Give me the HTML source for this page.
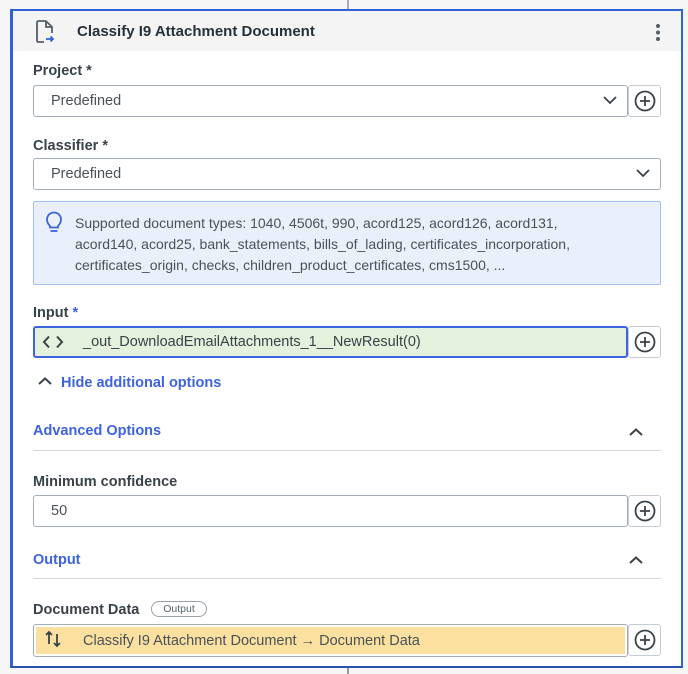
<!DOCTYPE html>
<html><head><meta charset="utf-8"><style>
*{box-sizing:border-box;margin:0;padding:0}
body{width:688px;height:674px;background:#f6f6f6;font-family:"Liberation Sans",sans-serif;position:relative;overflow:hidden;color:#273139}
.a{position:absolute}
.card{left:10px;top:9px;width:673px;height:659px;background:#fff;border:2px solid #2f62d6;border-left:3px solid #2f62d6;border-bottom:2px solid #2a50b0}
.hdr{left:13px;top:11px;width:668px;height:40px;background:#f4f4f4}
.lbl{font-size:14.5px;font-weight:bold;color:#3a4148}
.box{border:1px solid #a4adb5;border-radius:3px;background:#fff;font-size:14.5px;color:#4a5158;padding-left:17px;display:flex;align-items:center}
.plus{width:33px;height:32px;border:1px solid #c6ccd1;border-radius:3px;background:#fff;display:flex;align-items:center;justify-content:center}
.blue{color:#3d63dd;font-size:14.5px;font-weight:bold}
.hr{height:1px;background:#d5dadd;left:33px;width:628px}
</style></head><body>
<div class="a" style="left:347px;top:0;width:2px;height:9px;background:#aab"></div>
<div class="a" style="left:347px;top:668px;width:2px;height:6px;background:#999"></div>
<div class="a card"></div>
<div class="a hdr"></div>
<svg class="a" style="left:34px;top:19px" width="24" height="26" viewBox="0 0 24 26"><path d="M12 2H4.5Q3 2 3 3.5v18Q3 23 4.5 23H10M12 2l6 6v6M12 2v6h6" fill="none" stroke="#555d66" stroke-width="1.8"/><path d="M12 20h7M16.5 17.5l2.5 2.5-2.5 2.5" fill="none" stroke="#2f62d6" stroke-width="1.8"/></svg>
<div class="a" style="left:77px;top:23px;font-size:15px;font-weight:bold;color:#273139">Classify I9 Attachment Document</div>
<svg class="a" style="left:653px;top:23px" width="10" height="20"><circle cx="5" cy="3" r="2" fill="#555d66"/><circle cx="5" cy="9.5" r="2" fill="#555d66"/><circle cx="5" cy="16" r="2" fill="#555d66"/></svg>

<div class="a lbl" style="left:33px;top:63px">Project *</div>
<div class="a box" style="left:33px;top:85px;width:595px;height:32px">Predefined</div>
<svg class="a" style="left:603px;top:96px" width="14" height="9"><path d="M1 1l6 6 6-6" fill="none" stroke="#3a4148" stroke-width="1.8"/></svg>
<div class="a plus" style="left:628px;top:85px"><svg width="22" height="22"><circle cx="11" cy="11" r="9.5" fill="none" stroke="#3a4148" stroke-width="1.8"/><path d="M11 6v10M6 11h10" stroke="#3a4148" stroke-width="1.8"/></svg></div>

<div class="a lbl" style="left:33px;top:138px">Classifier *</div>
<div class="a box" style="left:33px;top:158px;width:628px;height:32px">Predefined</div>
<svg class="a" style="left:636px;top:169px" width="14" height="9"><path d="M1 1l6 6 6-6" fill="none" stroke="#3a4148" stroke-width="1.8"/></svg>

<div class="a" style="left:33px;top:201px;width:628px;height:84px;background:#eaf0fb;border:1px solid #a3c0f0;border-radius:2px"></div>
<svg class="a" style="left:45px;top:211px" width="18" height="24"><path d="M5 15q-3-3-3-6.5a7 7 0 0 1 14 0q0 3.5-3 6.5v1.5H5z" fill="none" stroke="#3d63dd" stroke-width="1.8"/><path d="M5.5 20h7" stroke="#3d63dd" stroke-width="1.8"/></svg>
<div class="a" style="left:75px;top:213px;font-size:14px;line-height:21px;color:#4a5158;width:580px">Supported document types: 1040, 4506t, 990, acord125, acord126, acord131,<br>acord140, acord25, bank_statements, bills_of_lading, certificates_incorporation,<br>certificates_origin, checks, children_product_certificates, cms1500, ...</div>

<div class="a lbl" style="left:33px;top:305px">Input <span style="color:#3d63dd">*</span></div>
<div class="a box" style="left:33px;top:326px;width:595px;height:32px;background:#e4f1dc;border:2px solid #3d63dd;padding-left:48px;color:#3a4148">_out_DownloadEmailAttachments_1__NewResult(0)</div>
<svg class="a" style="left:42px;top:335px" width="22" height="14"><path d="M7 1.5L2 7l5 5.5M15 1.5L20 7l-5 5.5" fill="none" stroke="#3a4148" stroke-width="2"/></svg>
<div class="a plus" style="left:628px;top:326px"><svg width="22" height="22"><circle cx="11" cy="11" r="9.5" fill="none" stroke="#3a4148" stroke-width="1.8"/><path d="M11 6v10M6 11h10" stroke="#3a4148" stroke-width="1.8"/></svg></div>

<svg class="a" style="left:38px;top:377px" width="14" height="9"><path d="M1 7l6-5.5 6 5.5" fill="none" stroke="#3a4148" stroke-width="2"/></svg>
<div class="a blue" style="left:61px;top:375px">Hide additional options</div>

<div class="a blue" style="left:33px;top:423px">Advanced Options</div>
<svg class="a" style="left:629px;top:428px" width="14" height="9"><path d="M1 7l6-5.5 6 5.5" fill="none" stroke="#3a4148" stroke-width="2"/></svg>
<div class="a hr" style="top:450px"></div>

<div class="a lbl" style="left:33px;top:474px">Minimum confidence</div>
<div class="a box" style="left:33px;top:495px;width:595px;height:32px">50</div>
<div class="a plus" style="left:628px;top:495px"><svg width="22" height="22"><circle cx="11" cy="11" r="9.5" fill="none" stroke="#3a4148" stroke-width="1.8"/><path d="M11 6v10M6 11h10" stroke="#3a4148" stroke-width="1.8"/></svg></div>

<div class="a blue" style="left:33px;top:552px">Output</div>
<svg class="a" style="left:629px;top:556px" width="14" height="9"><path d="M1 7l6-5.5 6 5.5" fill="none" stroke="#3a4148" stroke-width="2"/></svg>
<div class="a hr" style="top:578px"></div>

<div class="a lbl" style="left:33px;top:602px">Document Data</div>
<div class="a" style="left:151px;top:601px;width:56px;height:16px;border:1px solid #9aa2a9;border-radius:9px;font-size:10.5px;color:#5a626a;text-align:center;line-height:14px">Output</div>
<div class="a box" style="left:33px;top:624px;width:595px;height:33px;padding:2px"><div style="width:100%;height:100%;background:#fbe0a0;padding-left:47px;display:flex;align-items:center;color:#4a5158">Classify I9 Attachment Document → Document Data</div></div>
<svg class="a" style="left:45px;top:630px" width="18" height="18"><path d="M4 14V2M1 5l3-3 3 3M12 4v12M9 13l3 3 3-3" fill="none" stroke="#3a4148" stroke-width="1.8"/></svg>
<div class="a plus" style="left:628px;top:624px"><svg width="22" height="22"><circle cx="11" cy="11" r="9.5" fill="none" stroke="#3a4148" stroke-width="1.8"/><path d="M11 6v10M6 11h10" stroke="#3a4148" stroke-width="1.8"/></svg></div>
</body></html>
